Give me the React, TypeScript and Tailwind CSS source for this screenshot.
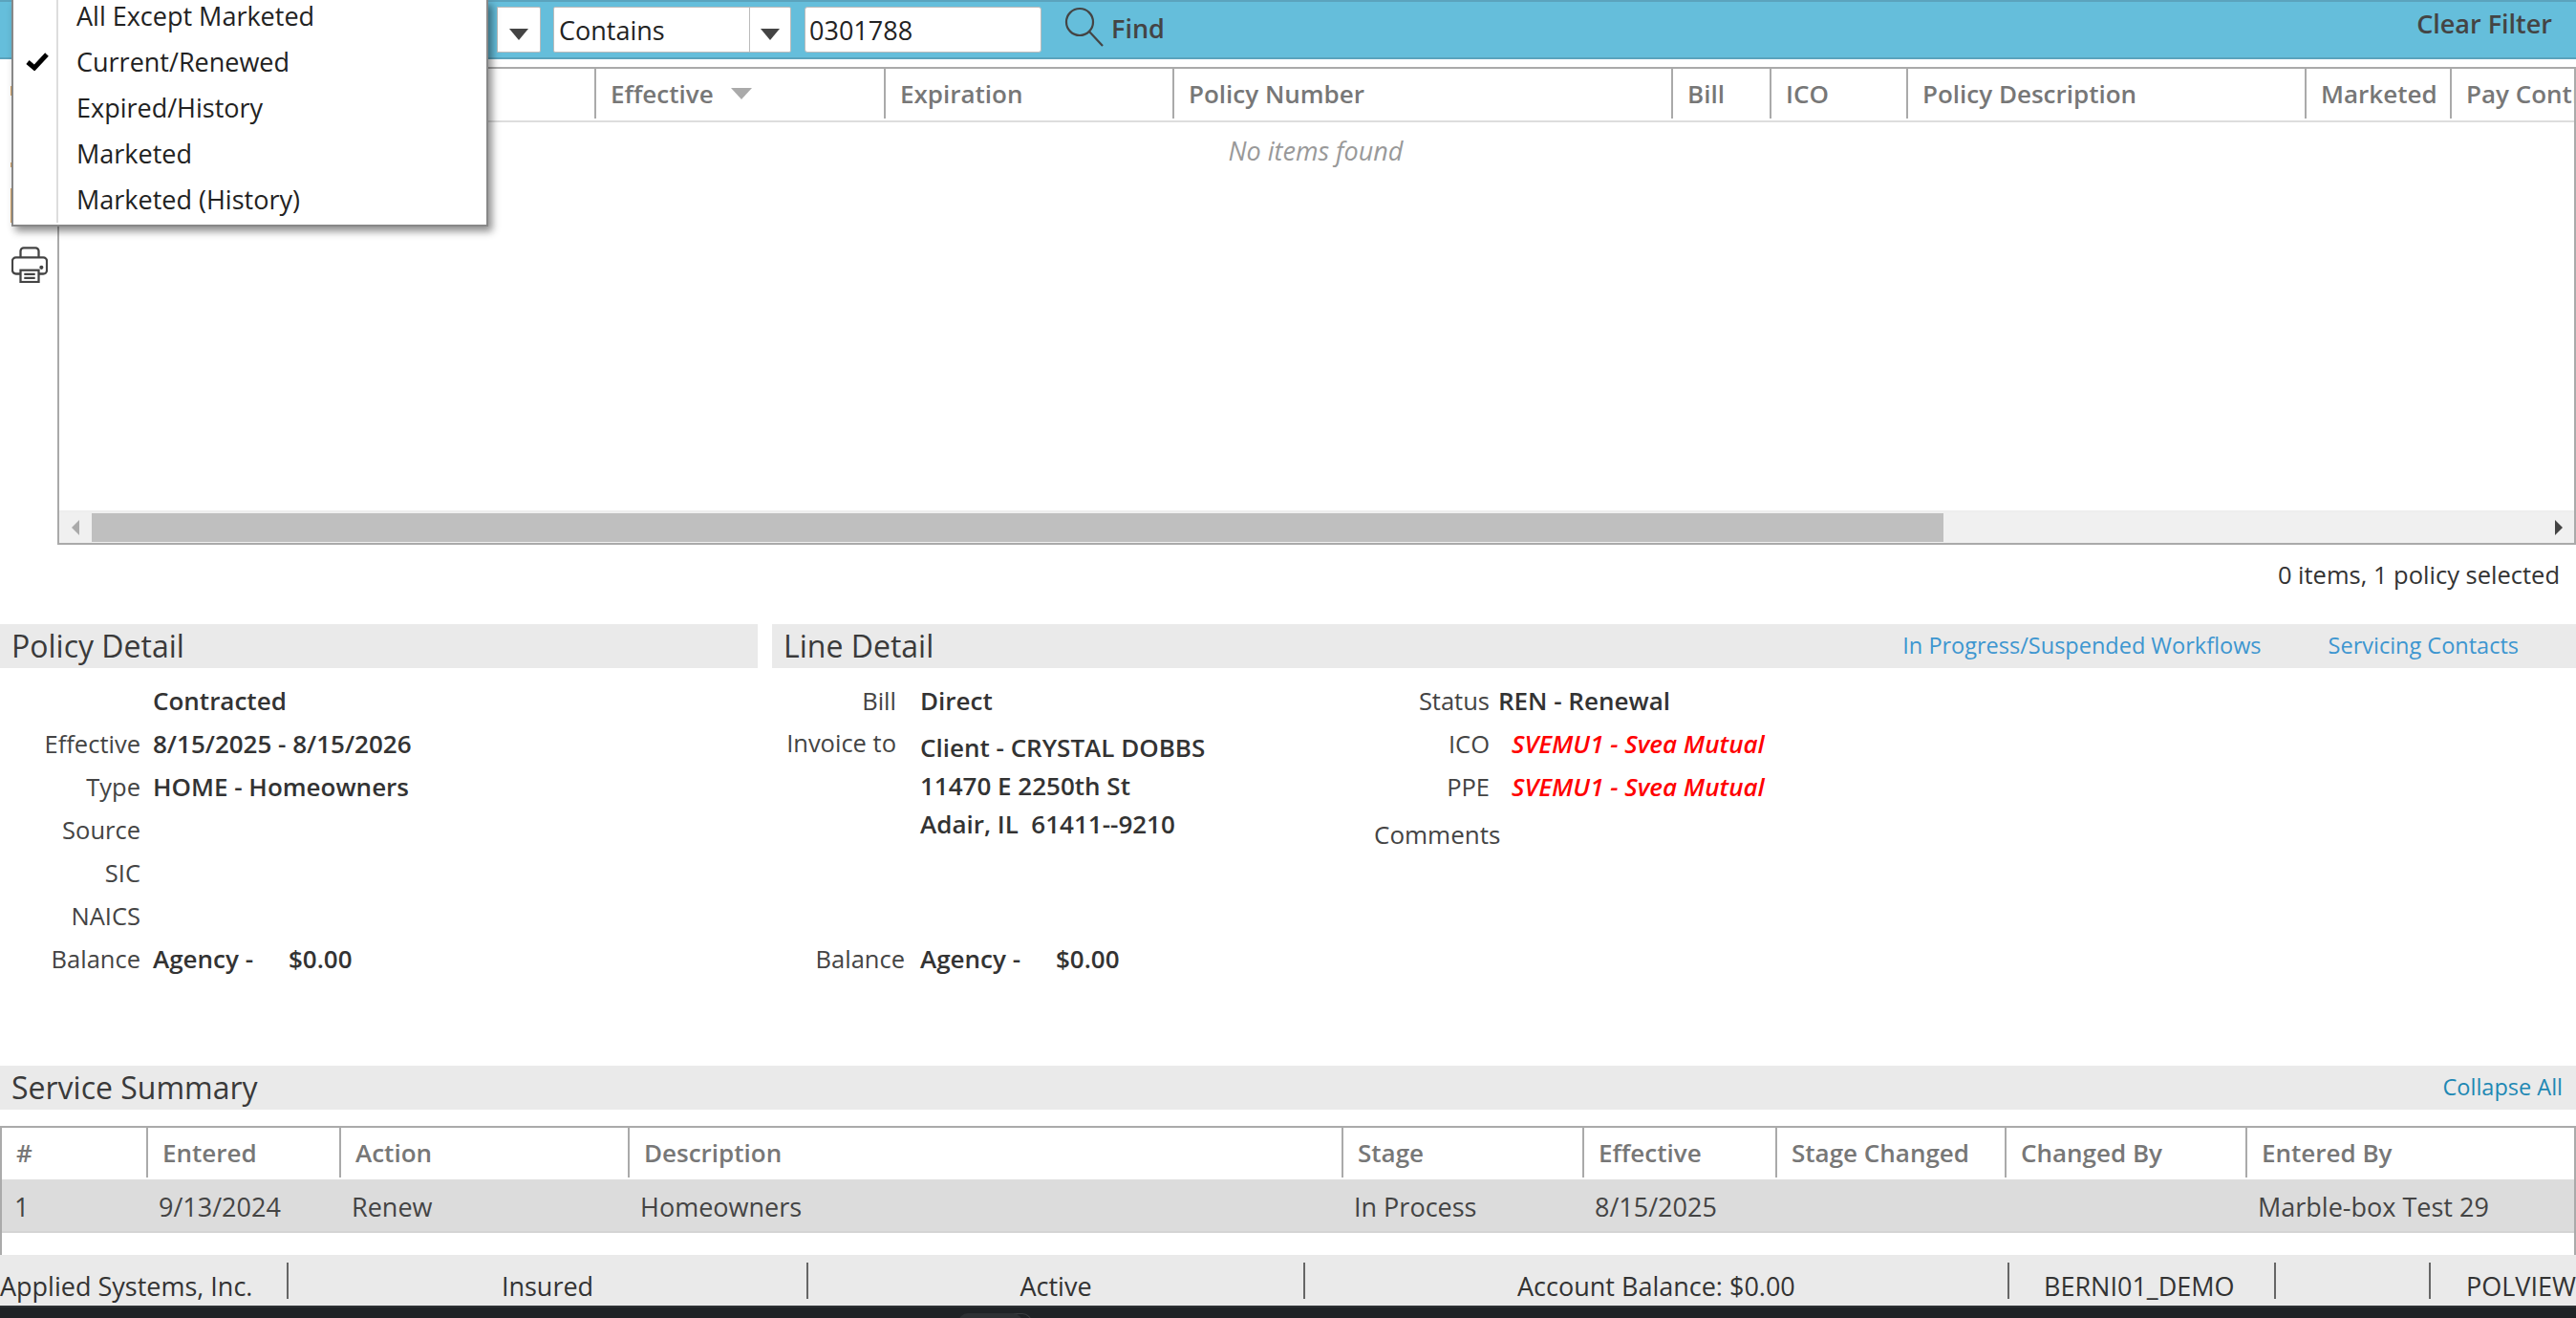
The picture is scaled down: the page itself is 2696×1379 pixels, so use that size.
import React from "react";

const Caret = () => (
  <svg width="20" height="12" viewBox="0 0 20 12" className="mt-[10px] block"><path d="M0 0H20L10 12Z" fill="#444" /></svg>
);

const Select = ({ wClass, divClass, text }: { wClass: string; divClass: string; text: string }) => (
  <div className={`flex h-[48px] items-center rounded-[2px] border border-[#bbb] bg-white ${wClass}`}>
    <div className={`h-full truncate border-r border-[#bbb] pt-[1px] pl-[5px] text-[27px] leading-[46px] text-[#222] ${divClass}`}>{text}</div>
    <div className="flex flex-1 items-center justify-center"><Caret /></div>
  </div>
);

const head1 = [
  { t: "" },
  { t: "Effective", sort: true },
  { t: "Expiration" },
  { t: "Policy Number" },
  { t: "Bill" },
  { t: "ICO" },
  { t: "Policy Description" },
  { t: "Marketed" },
  { t: "Pay Contract" },
];

const head2 = ["#", "Entered", "Action", "Description", "Stage", "Effective", "Stage Changed", "Changed By", "Entered By"];
const row2 = ["1", "9/13/2024", "Renew", "Homeowners", "In Process", "8/15/2025", "", "", "Marble-box Test 29"];

const HeadCell = ({ t, sort, first }: { t: string; sort?: boolean; first?: boolean }) => (
  <div className={`flex h-[52px] items-center overflow-hidden whitespace-nowrap pl-[15px] text-[26px] font-semibold text-[#777] ${first ? "" : "border-l-2 border-[#aaa]"}`}>
    {t}
    {sort && (
      <svg width="22" height="12" viewBox="0 0 22 12" className="ml-[18px]"><path d="M0 0H22L11 12Z" fill="#aaa" /></svg>
    )}
  </div>
);

const Field = ({ label, labelW, children }: { label: string; labelW: string; children?: React.ReactNode }) => (
  <div className="flex h-[45px] items-center">
    <div className={`shrink-0 text-right text-[25.5px] text-[#444] ${labelW}`}>{label}</div>
    <div className="text-[26px] font-semibold text-[#333]">{children}</div>
  </div>
);

const SectionBar = ({ title, className, children }: { title: string; className: string; children?: React.ReactNode }) => (
  <div className={`flex h-[46px] items-center justify-between bg-[#eaeaea] pl-[12px] ${className}`}>
    <div className="text-[32px] font-medium leading-none text-[#3a3a3a]">{title}</div>
    {children}
  </div>
);

const Divider = () => <div className="h-[38px] w-[2px] shrink-0 bg-[#666]" />;

export default function App() {
  return (
    <div className="relative flex h-[1379px] w-[2696px] flex-col overflow-hidden bg-white font-['Open_Sans',sans-serif] text-[24px] text-[#333]">
      {/* Filter bar */}
      <div className="flex h-[62px] shrink-0 items-center border-y-2 border-[#5ba3bd] bg-[#65bedb] pr-[25px] pl-[520px]">
        <div className="flex h-[48px] w-[46px] items-center justify-center rounded-r-[2px] border border-[#bbb] bg-white"><Caret /></div>
        <div className="ml-[13px]"><Select wClass="w-[249px]" divClass="w-[205px]" text="Contains" /></div>
        <div className="ml-[14px] h-[48px] w-[248px] rounded-[3px] border border-[#bbb] bg-white pt-[1px] pl-[4px] text-[27px] leading-[46px] text-[#222]">0301788</div>
        <svg width="42" height="42" viewBox="0 0 42 42" className="mb-[6px] ml-[24px]" fill="none" stroke="#444" strokeWidth="2.2"><circle cx="16" cy="16" r="14" /><path d="M26 26L40 41" /></svg>
        <div className="mb-[2px] ml-[7px] text-[27px] font-semibold text-[#444]">Find</div>
        <div className="mb-[12px] ml-auto text-[27px] font-semibold text-[#444]">Clear Filter</div>
      </div>

      {/* Upper area */}
      <div className="mt-[8px] flex h-[500px] shrink-0">
        <div className="flex w-[60px] shrink-0 flex-col pl-[11px]">
          <div className="mt-[20px] h-[10px] w-[1px] bg-[#d9a562]" />
          <div className="mt-[70px] h-[5px] w-[1px] bg-[#d9a562]" />
          <div className="mt-[22px] h-[36px] w-[1px] bg-[#d9a562]" />
          <svg width="38" height="38" viewBox="0 0 40 40" className="mt-[25px] ml-[1px]" fill="none" stroke="#444" strokeWidth="2.4">
            <path d="M10 12V5a3.5 3.5 0 0 1 3.5-3.5h13A3.5 3.5 0 0 1 30 5v7" />
            <path d="M10 30H5a4 4 0 0 1-4-4V16a4 4 0 0 1 4-4h30a4 4 0 0 1 4 4v10a4 4 0 0 1-4 4h-5" />
            <rect x="10" y="26" width="20" height="13" />
            <path d="M14 30.5h12M14 34.5h12" />
            <circle cx="33" cy="23" r="1" fill="#444" />
          </svg>
        </div>
        <div className="flex min-w-0 flex-1 flex-col overflow-hidden border-2 border-[#aaa]">
          <div className="grid grid-cols-[560px_303px_302px_522px_103px_143px_417px_152px_1fr] border-b-2 border-[#ddd] pb-[2px]">
            {head1.map((h, i) => (
              <HeadCell key={i} t={h.t} sort={h.sort} first={i === 0} />
            ))}
          </div>
          <div className="flex-1 pt-[10px] pr-[2px] text-center text-[27px] text-[#999] italic">No items found</div>
          <div className="flex h-[34px] shrink-0 items-center border-t-2 border-[#eee] bg-[#f0f0f0]">
            <svg width="8" height="16" viewBox="0 0 8 16" className="ml-[13px]"><path d="M8 0V16L0 8Z" fill="#aaa" /></svg>
            <div className="ml-[13px] h-[30px] w-[1938px] bg-[#bfbfbf]" />
            <svg width="8" height="16" viewBox="0 0 8 16" className="mr-[12px] ml-auto"><path d="M0 0V16L8 8Z" fill="#444" /></svg>
          </div>
        </div>
      </div>

      {/* Count */}
      <div className="flex h-[83px] shrink-0 justify-end pt-[14px] pr-[17px] text-[25.5px] leading-[34px] text-[#333]">0 items, 1 policy selected</div>

      {/* Detail */}
      <div className="flex h-[462px] shrink-0 gap-[15px]">
        <div className="w-[793px] shrink-0">
          <SectionBar title="Policy Detail" className="" />
          <div className="pt-[12px]">
            <Field label="" labelW="w-[160px] pr-[13px]">Contracted</Field>
            <Field label="Effective" labelW="w-[160px] pr-[13px]">8/15/2025 - 8/15/2026</Field>
            <Field label="Type" labelW="w-[160px] pr-[13px]">HOME - Homeowners</Field>
            <Field label="Source" labelW="w-[160px] pr-[13px]" />
            <Field label="SIC" labelW="w-[160px] pr-[13px]" />
            <Field label="NAICS" labelW="w-[160px] pr-[13px]" />
            <Field label="Balance" labelW="w-[160px] pr-[13px]">
              <span className="inline-block w-[142px]">Agency -</span>$0.00
            </Field>
          </div>
        </div>
        <div className="min-w-0 flex-1">
          <SectionBar title="Line Detail" className="pr-[60px]">
            <div className="flex gap-[70px] text-[23.5px] text-[#3d96d0]">
              <span>In Progress/Suspended Workflows</span>
              <span>Servicing Contacts</span>
            </div>
          </SectionBar>
          <div className="flex pt-[12px]">
            <div className="w-[630px] shrink-0">
              <Field label="Bill" labelW="w-[130px] mr-[25px]">Direct</Field>
              <div className="flex h-[225px]">
                <div className="w-[130px] pt-[6px] text-right text-[25.5px] leading-[30px] text-[#444]">Invoice to</div>
                <div className="ml-[25px] pt-[6px] text-[26px] leading-[40px] font-semibold text-[#333]">
                  <div>Client - CRYSTAL DOBBS</div>
                  <div>11470 E 2250th St</div>
                  <div className="whitespace-pre">Adair, IL  61411--9210</div>
                </div>
              </div>
              <Field label="Balance" labelW="w-[139px] mr-[16px]">
                <span className="inline-block w-[142px]">Agency -</span>$0.00
              </Field>
            </div>
            <div>
              <Field label="Status" labelW="w-[121px] mr-[9px]">REN - Renewal</Field>
              <Field label="ICO" labelW="w-[121px] mr-[23px]"><span className="text-[#ff0000] italic">SVEMU1 - Svea Mutual</span></Field>
              <Field label="PPE" labelW="w-[121px] mr-[23px]"><span className="text-[#ff0000] italic">SVEMU1 - Svea Mutual</span></Field>
              <div className="pt-[8px] text-[26px] text-[#444]">Comments</div>
            </div>
          </div>
        </div>
      </div>

      {/* Service Summary */}
      <SectionBar title="Service Summary" className="shrink-0 pr-[14px]">
        <span className="text-[23.5px] text-[#1e88b4]">Collapse All</span>
      </SectionBar>
      <div className="mt-[17px] flex h-[135px] shrink-0 flex-col border-x-2 border-t-2 border-[#aaa]">
        <div className="grid grid-cols-[151px_202px_302px_747px_252px_202px_240px_252px_1fr] border-b-2 border-[#ddd] pb-[2px]">
          {head2.map((t, i) => (
            <HeadCell key={i} t={t} first={i === 0} />
          ))}
        </div>
        <div className="grid h-[54px] grid-cols-[151px_202px_302px_747px_252px_202px_240px_252px_1fr] items-center border-b-2 border-[#d4d4d4] bg-[#dcdcdc] pt-[2px] text-[27px] text-[#444]">
          {row2.map((t, i) => (
            <div key={i} className="pl-[13px]">{t}</div>
          ))}
        </div>
      </div>

      {/* Status bar */}
      <div className="flex h-[53px] shrink-0 items-center overflow-hidden bg-[#eaeaea] pt-[13px] text-[27px] whitespace-nowrap text-[#333]">
        <div className="w-[300px] shrink-0">Applied Systems, Inc.</div>
        <div className="-mt-[13px] flex h-[38px] items-center"><Divider /></div>
        <div className="w-[542px] shrink-0 text-center">Insured</div>
        <div className="-mt-[13px] flex h-[38px] items-center"><Divider /></div>
        <div className="w-[518px] shrink-0 text-center">Active</div>
        <div className="-mt-[13px] flex h-[38px] items-center"><Divider /></div>
        <div className="w-[735px] shrink-0 pl-[222px]">Account Balance: $0.00</div>
        <div className="-mt-[13px] flex h-[38px] items-center"><Divider /></div>
        <div className="w-[277px] shrink-0 pl-[36px]">BERNI01_DEMO</div>
        <div className="-mt-[13px] flex h-[38px] items-center"><Divider /></div>
        <div className="w-[160px] shrink-0" />
        <div className="-mt-[13px] flex h-[38px] items-center"><Divider /></div>
        <div className="pl-[37px]">POLVIEW</div>
      </div>
      <div className="relative flex-1 overflow-hidden border-t-2 border-[#2c3033] bg-[#1f2326]">
        <div className="absolute top-[6px] left-[1013px] h-[12px] w-[67px] rounded-t-[10px] border-t border-r border-[#3a3e41]" />
        <div className="absolute top-[6px] left-[1003px] h-[12px] w-[67px] rounded-t-[10px] bg-[#2d3134]" />
      </div>

      {/* Open dropdown menu */}
      <div className="absolute top-0 left-[12px] h-[237px] w-[499px] border-x-2 border-b-2 border-[#888] bg-white shadow-[4px_5px_8px_rgba(0,0,0,0.45)]">
        <div className="absolute top-0 bottom-[2px] left-[45px] w-[2px] bg-[#ddd]" />
        <div className="absolute -top-[8px] left-0 flex flex-col text-[27px]">
          {["All Except Marketed", "Current/Renewed", "Expired/History", "Marketed", "Marketed (History)"].map((t, i) => (
            <div key={t} className="flex h-[48px] items-center pl-[66px] leading-none whitespace-nowrap text-[#222]">
              {i === 1 && (
                <svg width="24" height="20" viewBox="0 0 24 20" className="absolute left-[13px]"><path d="M2 11L9 17L22 3" fill="none" stroke="#000" strokeWidth="5" /></svg>
              )}
              {t}
            </div>
          ))}
        </div>
      </div>
    </div>
  );
}
